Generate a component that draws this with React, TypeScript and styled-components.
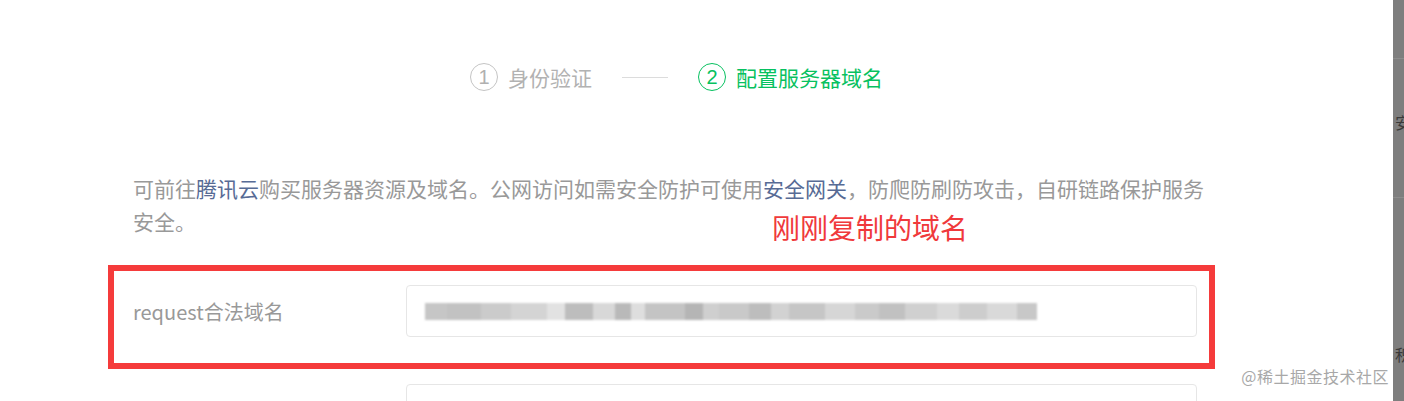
import styled, { createGlobalStyle } from "styled-components";

const GlobalStyle = createGlobalStyle`
  html, body {
    margin: 0;
    padding: 0;
    height: 401px;
    overflow: hidden;
    background: #fff;
    font-family: "Noto Sans CJK SC", "Noto Sans", sans-serif;
  }
`;

const green = "#07c160";

const blurBlocks = [
  { w: 22, c: "#c6c6c6" }, { w: 34, c: "#c2c2c2" }, { w: 30, c: "#cbcbcb" },
  { w: 36, c: "#d4d4d4" }, { w: 18, c: "#e2e2e2" }, { w: 28, c: "#bdbdbd" },
  { w: 22, c: "#d8d8d8" }, { w: 16, c: "#b9b9b9" }, { w: 14, c: "#dedede" },
  { w: 40, c: "#c4c4c4" }, { w: 18, c: "#b5b5b5" }, { w: 16, c: "#cfcfcf" },
  { w: 30, c: "#c9c9c9" }, { w: 22, c: "#bdbdbd" }, { w: 18, c: "#d2d2d2" },
  { w: 36, c: "#c6c6c6" }, { w: 30, c: "#d6d6d6" }, { w: 24, c: "#cacaca" },
  { w: 26, c: "#c1c1c1" }, { w: 32, c: "#d0d0d0" }, { w: 22, c: "#dadada" },
  { w: 28, c: "#cdcdcd" }, { w: 30, c: "#d9d9d9" }, { w: 20, c: "#c8c8c8" },
];

export default function App() {
  return (
    <>
      <GlobalStyle />
      <Page>
        <Main>
          <Steps>
            <Step>
              <StepNum>1</StepNum>
              <StepText>身份验证</StepText>
            </Step>
            <StepLine />
            <Step active>
              <StepNum active>2</StepNum>
              <StepText active>配置服务器域名</StepText>
            </Step>
          </Steps>

          <Content>
            <Intro>
              可前往<Link>腾讯云</Link>购买服务器资源及域名。公网访问如需安全防护可使用
              <Link>安全网关</Link>，防爬防刷防攻击，自研链路保护服务安全。
            </Intro>

            <Form>
              <Row highlight>
                <Note>刚刚复制的域名</Note>
                <Label>request合法域名</Label>
                <Field>
                  <Blurred>
                    {blurBlocks.map((b, i) => (
                      <Pixel key={i} style={{ width: b.w, background: b.c }} />
                    ))}
                  </Blurred>
                </Field>
              </Row>
              <Row>
                <Label>socket合法域名</Label>
                <Field />
              </Row>
            </Form>
          </Content>

          <Watermark>@稀土掘金技术社区</Watermark>
        </Main>
        <Side>
          <SideGlyph style={{ top: 112 }}>安</SideGlyph>
          <SideGlyph style={{ top: 344 }}>积</SideGlyph>
        </Side>
      </Page>
    </>
  );
}

const Page = styled.div`
  display: flex;
  height: 401px;
  overflow: hidden;
`;

const Main = styled.div`
  position: relative;
  flex: 1;
  background: #fff;
`;

const Steps = styled.div`
  display: flex;
  align-items: center;
  padding: 63px 0 0 470px;
  height: 28px;
`;

const Step = styled.div<{ active?: boolean }>`
  display: flex;
  align-items: center;
  gap: 10px;
`;

const StepNum = styled.span<{ active?: boolean }>`
  box-sizing: border-box;
  width: 28px;
  height: 28px;
  border-radius: 50%;
  border: 1.5px solid ${({ active }) => (active ? green : "#c4c4c4")};
  color: ${({ active }) => (active ? green : "#b0b0b0")};
  display: flex;
  align-items: center;
  justify-content: center;
  font-size: 20px;
  font-family: "Liberation Sans", sans-serif;
  line-height: 1;
`;

const StepText = styled.span<{ active?: boolean }>`
  font-size: 21px;
  color: ${({ active }) => (active ? green : "#b2b2b2")};
  line-height: 28px;
`;

const StepLine = styled.span`
  width: 46px;
  height: 1px;
  background: #dcdcdc;
  margin: 0 30px;
`;

const Content = styled.div`
  margin: 81px 0 0 133px;
  width: 1080px;
`;

const Intro = styled.p`
  margin: 0;
  font-size: 21px;
  line-height: 33px;
  color: #999;
`;

const Link = styled.span`
  color: #576b95;
`;

const Form = styled.div`
  margin-top: 47px;
  display: flex;
  flex-direction: column;
  gap: 47px;
  width: 1064px;
`;

const Row = styled.div<{ highlight?: boolean }>`
  position: relative;
  display: flex;
  align-items: center;

  ${({ highlight }) =>
    highlight &&
    `
    &::before {
      content: "";
      position: absolute;
      top: -20px;
      left: -25px;
      right: -18px;
      bottom: -32px;
      border: 6px solid #f53b3b;
      pointer-events: none;
    }
  `}
`;

const Note = styled.span`
  position: absolute;
  left: 639px;
  top: -76px;
  font-size: 28px;
  line-height: 36px;
  color: #f0393b;
  white-space: nowrap;
`;

const Label = styled.span`
  width: 273px;
  flex-shrink: 0;
  font-size: 20px;
  color: #999;
`;

const Field = styled.div`
  box-sizing: border-box;
  flex: 1;
  height: 52px;
  border: 1px solid #e6e6e6;
  border-radius: 4px;
  display: flex;
  align-items: center;
  padding-left: 18px;
`;

const Blurred = styled.div`
  display: flex;
  height: 17px;
  filter: blur(1px);
`;

const Pixel = styled.span`
  height: 100%;
`;

const Watermark = styled.div`
  position: absolute;
  right: 4px;
  top: 364px;
  font-size: 16px;
  color: #a8a8a8;
  letter-spacing: 0.5px;
`;

const Side = styled.div`
  position: relative;
  width: 11px;
  flex-shrink: 0;
  background: #7e7e7e;
  overflow: hidden;

  &::before,
  &::after {
    content: "";
    position: absolute;
    left: 0;
    right: 0;
    height: 1px;
    background: #8c8c8c;
  }
  &::before { top: 58px; }
  &::after { top: 197px; }
`;

const SideGlyph = styled.span`
  position: absolute;
  left: 2px;
  font-size: 16px;
  line-height: 20px;
  color: #3a3a3a;
`;
